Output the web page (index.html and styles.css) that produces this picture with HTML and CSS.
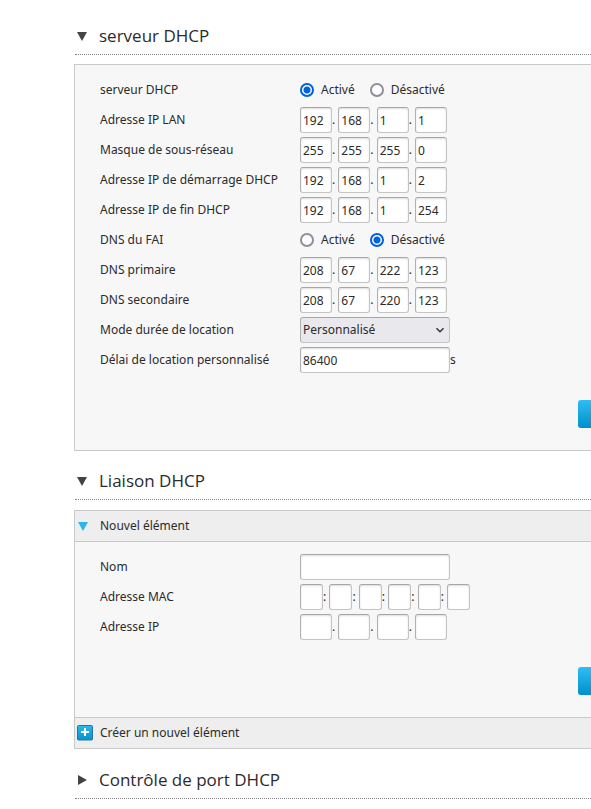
FILE: index.html
```html
<!DOCTYPE html>
<html lang="fr">
<head>
<meta charset="utf-8">
<title>DHCP</title>
<link rel="stylesheet" href="styles.css">
</head>
<body>
<main class="page">
  <section>
    <h2 class="heading"><svg class="arrow" viewBox="0 0 10 10" aria-hidden="true"><path d="M0 1h10L5 10z"/></svg>serveur DHCP</h2>
    <form class="panel">
      <div class="fields">
        <div class="row" role="radiogroup" aria-labelledby="dhcp"><span class="label" id="dhcp">serveur DHCP</span>
          <label class="choice"><input type="radio" name="dhcp" checked>Activé</label>
          <label class="choice"><input type="radio" name="dhcp">Désactivé</label>
        </div>
        <div class="row"><label class="label" for="lan">Adresse IP LAN</label>
          <div class="parts"><input id="lan" value="192"><span>.</span><input aria-label="LAN 2" value="168"><span>.</span><input aria-label="LAN 3" value="1"><span>.</span><input aria-label="LAN 4" value="1"></div>
        </div>
        <div class="row"><label class="label" for="mask">Masque de sous-réseau</label>
          <div class="parts"><input id="mask" value="255"><span>.</span><input aria-label="Masque 2" value="255"><span>.</span><input aria-label="Masque 3" value="255"><span>.</span><input aria-label="Masque 4" value="0"></div>
        </div>
        <div class="row"><label class="label" for="start">Adresse IP de démarrage DHCP</label>
          <div class="parts"><input id="start" value="192"><span>.</span><input aria-label="Démarrage 2" value="168"><span>.</span><input aria-label="Démarrage 3" value="1"><span>.</span><input aria-label="Démarrage 4" value="2"></div>
        </div>
        <div class="row"><label class="label" for="end">Adresse IP de fin DHCP</label>
          <div class="parts"><input id="end" value="192"><span>.</span><input aria-label="Fin 2" value="168"><span>.</span><input aria-label="Fin 3" value="1"><span>.</span><input aria-label="Fin 4" value="254"></div>
        </div>
        <div class="row" role="radiogroup" aria-labelledby="isp"><span class="label" id="isp">DNS du FAI</span>
          <label class="choice"><input type="radio" name="isp">Activé</label>
          <label class="choice"><input type="radio" name="isp" checked>Désactivé</label>
        </div>
        <div class="row"><label class="label" for="dns1">DNS primaire</label>
          <div class="parts"><input id="dns1" value="208"><span>.</span><input aria-label="DNS primaire 2" value="67"><span>.</span><input aria-label="DNS primaire 3" value="222"><span>.</span><input aria-label="DNS primaire 4" value="123"></div>
        </div>
        <div class="row"><label class="label" for="dns2">DNS secondaire</label>
          <div class="parts"><input id="dns2" value="208"><span>.</span><input aria-label="DNS secondaire 2" value="67"><span>.</span><input aria-label="DNS secondaire 3" value="220"><span>.</span><input aria-label="DNS secondaire 4" value="123"></div>
        </div>
        <div class="row"><label class="label" for="mode">Mode durée de location</label>
          <div class="select"><select id="mode"><option>Personnalisé</option></select><svg viewBox="0 0 10 10" aria-hidden="true"><path d="M1.5 3.2 5 6.7l3.5-3.5"/></svg></div>
        </div>
        <div class="row"><label class="label" for="lease">Délai de location personnalisé</label>
          <input class="wide" id="lease" value="86400"><span>s</span>
        </div>
      </div>
      <div class="actions"><button class="apply" type="button" aria-label="Appliquer"></button></div>
    </form>
  </section>

  <section>
    <h2 class="heading"><svg class="arrow" viewBox="0 0 10 10" aria-hidden="true"><path d="M0 1h10L5 10z"/></svg>Liaison DHCP</h2>
    <form class="panel list">
      <div class="bar top"><svg class="marker" viewBox="0 0 10 10" aria-hidden="true"><path d="M0 1h10L5 10z"/></svg>Nouvel élément</div>
      <div class="fields">
        <div class="row"><label class="label" for="name">Nom</label><input class="wide" id="name"></div>
        <div class="row"><label class="label" for="mac">Adresse MAC</label>
          <div class="parts mac"><input id="mac"><span>:</span><input aria-label="MAC 2"><span>:</span><input aria-label="MAC 3"><span>:</span><input aria-label="MAC 4"><span>:</span><input aria-label="MAC 5"><span>:</span><input aria-label="MAC 6"></div>
        </div>
        <div class="row"><label class="label" for="ip">Adresse IP</label>
          <div class="parts"><input id="ip"><span>.</span><input aria-label="IP 2"><span>.</span><input aria-label="IP 3"><span>.</span><input aria-label="IP 4"></div>
        </div>
      </div>
      <div class="actions"><button class="apply" type="button" aria-label="Appliquer"></button></div>
      <button class="bar create" type="button"><svg class="plus" viewBox="0 0 16 16" aria-hidden="true"><defs><linearGradient id="blue" x2="0" y2="1"><stop stop-color="#2cb9ee"/><stop offset="1" stop-color="#0792c9"/></linearGradient></defs><rect x=".5" y=".5" width="15" height="14.500" rx="1" fill="url(#blue)" stroke="#2576a6"/><path d="M7 3h2v3h3v2H9v3H7V8H4V6h3z" fill="#fff"/></svg>Créer un nouvel élément</button>
    </form>
  </section>

  <section>
    <h2 class="heading"><svg class="arrow" viewBox="0 0 10 10" aria-hidden="true"><path d="M1 0v10l9-5z"/></svg>Contrôle de port DHCP</h2>
  </section>
</main>
</body>
</html>
```

FILE: styles.css
```css
* { box-sizing: border-box; }

body {
  margin: 0;
  background: #fff;
  color: #2b2b2b;
  font: 12px/20px "Noto Sans", "Open Sans", sans-serif;
}

.page {
  margin-left: 74px;
  padding-top: 6px;
}

.heading {
  display: flex;
  align-items: center;
  gap: 12px;
  margin: 0 0 0 1px;
  padding: 16px 0 4px 2px;
  border-bottom: 1px dotted #888;
  font-family: "Open Sans", "Noto Sans", sans-serif;
  font-size: 17px;
  font-weight: 400;
  line-height: 28px;
}

.arrow { width: 10px; height: 10px; fill: #444; }

.panel {
  margin: 9px 0 0;
  border: 1px solid #c9c9c9;
  border-right: 0;
  background: #f7f7f7;
}

.list { margin: 10px 0 1px; }

.fields { padding: 10px 0 0 25px; }

.row { display: flex; align-items: center; height: 30px; }

.label { width: 200px; }

input, select, button { font: inherit; color: inherit; }

input, select {
  height: 26px;
  margin: 0;
  padding: 0 2px;
  border: 1px solid #c4c4c4;
  border-top-color: #a6a6a6;
  border-left-color: #b0b0b0;
  border-radius: 3px;
  background: #fff;
  box-shadow: inset 0 1px 2px #ddd;
}

.wide, select { width: 150px; }

.parts { display: flex; align-items: center; width: 147px; }
.parts input { width: 32px; }
.parts span { flex: 1; }
.mac { width: 170px; }
.mac input { width: 23px; }

.choice { display: flex; align-items: center; gap: 7px; margin-right: 15px; }

input[type="radio"] {
  appearance: none;
  width: 14px;
  height: 14px;
  padding: 0;
  border: 2px solid #8f8f9d;
  border-radius: 50%;
  box-shadow: none;
}

input[type="radio"]:checked {
  border-color: #0060df;
  background: radial-gradient(circle, #0060df 3px, #fff 4px);
}

.select { display: grid; align-items: center; }
.select select, .select svg { grid-area: 1 / 1; }
.select select { appearance: none; background: #e9e9ed; box-shadow: none; }
.select svg {
  justify-self: end;
  width: 10px;
  height: 10px;
  margin-right: 5px;
  fill: none;
  stroke: #333;
  stroke-width: 1.5;
  pointer-events: none;
}

.actions { display: flex; padding: 25px 0 22px 503px; overflow: hidden; }

.apply {
  flex: 1;
  max-width: 96px;
  height: 28px;
  padding: 0;
  border: 0;
  border-radius: 3px 0 0 3px;
  background: linear-gradient(#2fbdf5, #0090ca);
}

.bar {
  display: flex;
  align-items: center;
  width: 100%;
  height: 31px;
  padding: 0 3px;
  border: 0 solid #c9c9c9;
  background: #eee;
}

.top { gap: 12px; border-bottom-width: 1px; }
.create { gap: 7px; padding: 0 2px; border-top-width: 1px; }
.marker { width: 10px; height: 10px; fill: #2fb4e9; }
.plus { width: 16px; height: 16px; }
```
